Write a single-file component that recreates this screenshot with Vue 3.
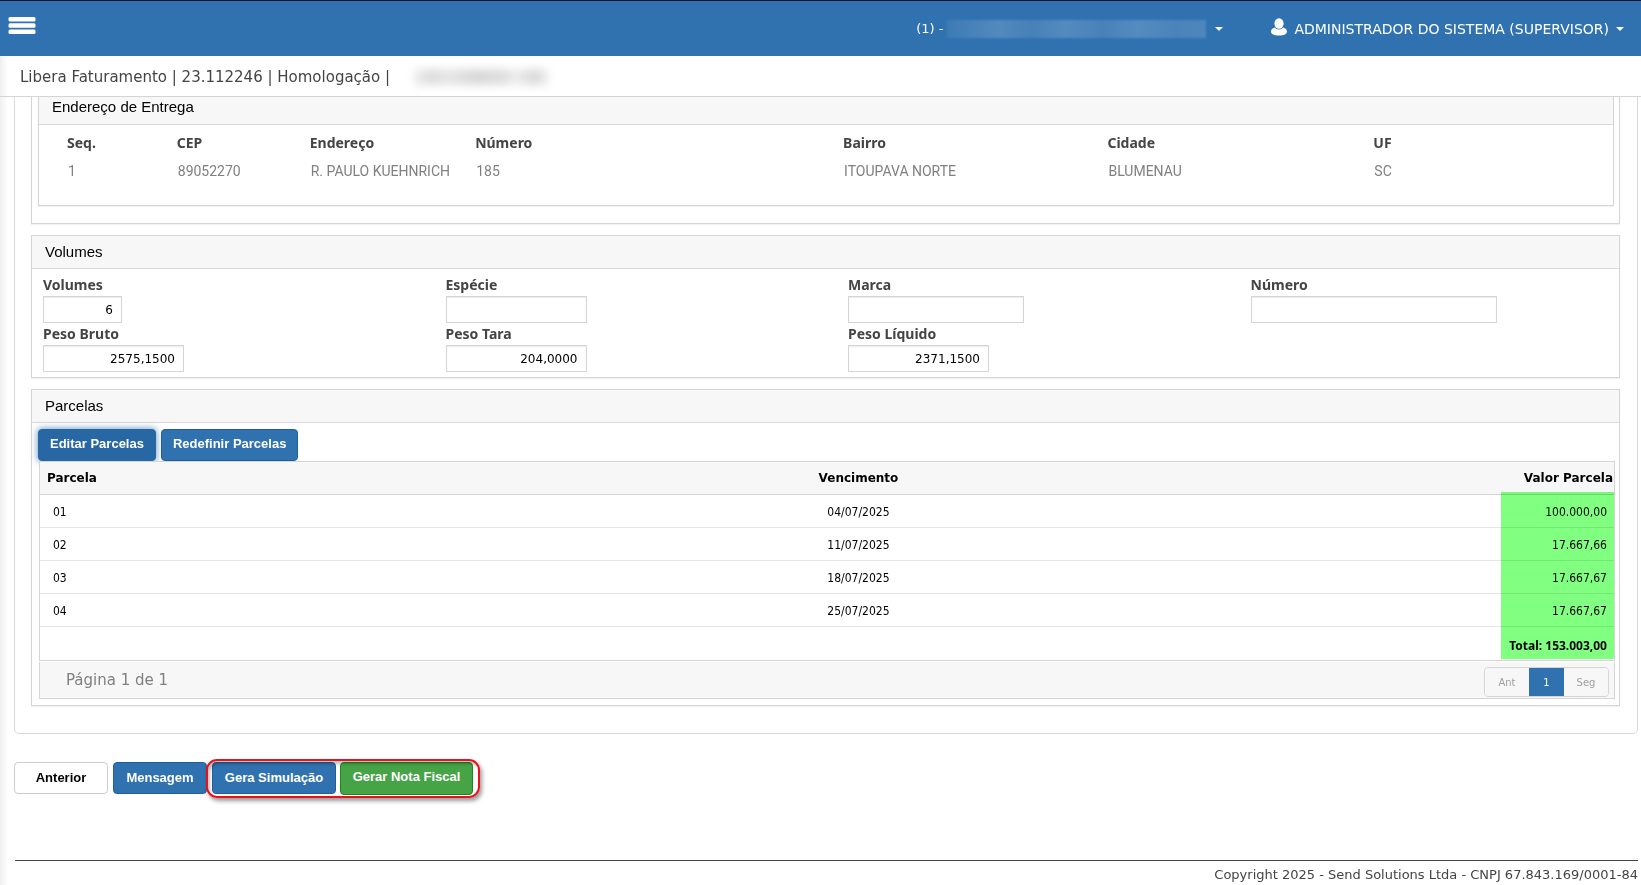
<script setup>
import { ref } from 'vue'

const addressCols = ['Seq.', 'CEP', 'Endereço', 'Número', 'Bairro', 'Cidade', 'UF']
const addresses = [
  ['1', '89052270', 'R. PAULO KUEHNRICH', '185', 'ITOUPAVA NORTE', 'BLUMENAU', 'SC'],
]

const fields = ref([
  { id: 'volumes', label: 'Volumes', value: '6', size: 'xs' },
  { id: 'especie', label: 'Espécie', value: '', size: 'sm' },
  { id: 'marca', label: 'Marca', value: '', size: 'md' },
  { id: 'numero', label: 'Número', value: '', size: 'lg' },
  { id: 'peso-bruto', label: 'Peso Bruto', value: '2575,1500', size: 'sm' },
  { id: 'peso-tara', label: 'Peso Tara', value: '204,0000', size: 'sm' },
  { id: 'peso-liquido', label: 'Peso Líquido', value: '2371,1500', size: 'sm' },
])

const parcelas = [
  { n: '01', venc: '04/07/2025', valor: '100.000,00' },
  { n: '02', venc: '11/07/2025', valor: '17.667,66' },
  { n: '03', venc: '18/07/2025', valor: '17.667,67' },
  { n: '04', venc: '25/07/2025', valor: '17.667,67' },
]
</script>

<template>
  <div class="page">
    <header class="topbar">
      <button class="menu" type="button" aria-label="Menu">
        <svg width="28" height="20" viewBox="0 0 28 20">
          <g fill="#fff">
            <rect x="0.5" y="1" width="27" height="4.500" rx="1.500" />
            <rect x="0.5" y="7.300" width="27" height="4.500" rx="1.500" />
            <rect x="0.5" y="13.600" width="27" height="4.500" rx="1.500" />
          </g>
        </svg>
      </button>
      <div class="account">
        <button class="drop company" type="button">
          <span>(1) -</span>
          <span class="redacted redacted-light"></span>
          <span class="caret"></span>
        </button>
        <button class="drop user" type="button">
          <svg width="16" height="18" viewBox="1 0 16 18">
            <ellipse cx="9" cy="5.5" rx="4.6" ry="5.2" fill="#fff" />
            <path d="M4.8 9.6C2.400 10.300 1 11.800 1 13.800c0 2.400 3.200 3.700 8 3.700s8-1.300 8-3.700c0-2-1.400-3.500-3.800-4.200-1 1.300-2.500 2-4.200 2s-3.200-.7-4.200-2z" fill="#fff" />
          </svg>
          <span>ADMINISTRADOR DO SISTEMA (SUPERVISOR)</span>
          <span class="caret"></span>
        </button>
      </div>
    </header>

    <div class="titlebar">
      <h1>Libera Faturamento | 23.112246 | Homologação |</h1>
      <span class="redacted redacted-dark"></span>
    </div>

    <main class="content">
      <div class="wizard">
        <section class="panel open-top">
          <div class="subpanel">
            <h2 class="heading cut">Endereço de Entrega</h2>
            <table class="address">
              <thead>
                <tr><th v-for="(c, i) in addressCols" :key="c" :class="'c' + i">{{ c }}</th></tr>
              </thead>
              <tbody>
                <tr v-for="row in addresses" :key="row[0]">
                  <td v-for="(v, i) in row" :key="i">{{ v }}</td>
                </tr>
              </tbody>
            </table>
          </div>
        </section>

        <section class="panel">
          <h2 class="heading">Volumes</h2>
          <div class="fields">
            <div v-for="f in fields" :key="f.id" class="field">
              <label :for="f.id">{{ f.label }}</label>
              <input :id="f.id" v-model="f.value" type="text" :class="f.size" />
            </div>
          </div>
        </section>

        <section class="panel">
          <h2 class="heading">Parcelas</h2>
          <div class="parcelas">
            <div class="tools">
              <button class="btn blue pressed" type="button">Editar Parcelas</button>
              <button class="btn blue" type="button">Redefinir Parcelas</button>
            </div>
            <div class="gridbox">
              <table class="grid">
                <thead>
                  <tr><th class="left">Parcela</th><th class="mid">Vencimento</th><th class="right">Valor Parcela</th></tr>
                </thead>
                <tbody>
                  <tr v-for="p in parcelas" :key="p.n">
                    <td class="left">{{ p.n }}</td>
                    <td>{{ p.venc }}</td>
                    <td class="right">{{ p.valor }}</td>
                  </tr>
                </tbody>
                <tfoot>
                  <tr>
                    <td></td>
                    <td></td>
                    <td class="right total">Total: 153.003,00</td>
                  </tr>
                </tfoot>
              </table>
              <div class="marker"></div>
            </div>
            <div class="pager">
              <span class="pages">Página 1 de 1</span>
              <nav class="nav">
                <button type="button">Ant</button>
                <button type="button" class="current">1</button>
                <button type="button">Seg</button>
              </nav>
            </div>
          </div>
        </section>
      </div>

      <div class="actions">
        <button class="btn white" type="button">Anterior</button>
        <button class="btn blue" type="button">Mensagem</button>
        <div class="highlight">
          <button class="btn blue sim" type="button">Gera Simulação</button>
          <button class="btn green" type="button">Gerar Nota Fiscal</button>
        </div>
      </div>
    </main>

    <footer class="footer">Copyright 2025 - Send Solutions Ltda - CNPJ 67.843.169/0001-84</footer>
  </div>
</template>

<style>
body {
  margin: 0;
  background: #fff;
}
</style>

<style scoped>
* {
  box-sizing: border-box;
}
.page {
  min-height: 100vh;
  overflow: hidden;
  display: flex;
  flex-direction: column;
  font-family: "DejaVu Sans", Verdana, sans-serif;
  color: #444;
  background: linear-gradient(to right, #f0f0f0, #fff 8px);
}
button {
  font: inherit;
  cursor: pointer;
}
h1,
h2 {
  margin: 0;
  font-weight: 400;
}

.topbar {
  display: flex;
  justify-content: space-between;
  align-items: flex-start;
  height: 56px;
  padding: 0 17px 0 8px;
  border-top: 1px solid #06162a;
  background: #3072af;
}
.menu {
  display: flex;
  margin-top: 15px;
  padding: 0;
  border: 0;
  background: none;
}
.account {
  display: flex;
  align-items: center;
  gap: 48px;
  height: 55px;
}
.drop {
  display: flex;
  align-items: center;
  padding: 0;
  border: 0;
  background: none;
  color: #fff;
  font-size: 14px;
  line-height: 20px;
  white-space: nowrap;
}
.company {
  font-size: 13px;
}
.user {
  gap: 7px;
}
.user svg {
  margin-bottom: 4px;
}
.caret {
  border: 4px solid transparent;
  border-top-color: #fff;
  border-bottom: 0;
}
.redacted-light {
  width: 259px;
  height: 18px;
  margin: 0 9px 0 4px;
  background: linear-gradient(to right, #3d7bb5, #528abd 20%, #4681b8 32%, #538bbe 46%, #4882b9 60%, #548cbf 74%, #4a84ba 88%, #4d87bc);
  filter: blur(1px);
}

.titlebar {
  display: flex;
  align-items: center;
  height: 41px;
  padding: 2px 20px 0;
  border-bottom: 1px solid #d5d5d5;
}
.titlebar h1 {
  font-size: 15px;
  line-height: 20px;
}
.redacted-dark {
  width: 134px;
  height: 16px;
  margin-left: 24px;
  background: linear-gradient(to right, #eee, #ddd 12%, #e6e6e6 26%, #d8d8d8 46%, #dedede 66%, #eee 76%, #d8d8d8 90%, #eee);
  filter: blur(4px);
}

.content {
  padding: 0 3px 0 14px;
}
.wizard {
  padding: 0 17px 27px 16px;
  border: 1px solid #d9d9d9;
  border-top: 0;
  border-radius: 0 0 5px 5px;
}
.panel {
  margin-bottom: 11px;
  border: 1px solid #d5d5d5;
  box-shadow: 0 1px 1px rgba(0, 0, 0, 0.05);
}
.panel:last-child {
  margin-bottom: 0;
}
.open-top {
  padding: 0 5px 17px 6px;
  border-top: 0;
}
.subpanel {
  border: 1px solid #d5d5d5;
  border-top: 0;
  box-shadow: 0 1px 1px rgba(0, 0, 0, 0.05);
}
.heading {
  padding: 0 13px;
  border-bottom: 1px solid #d9d9d9;
  background: #f7f7f7;
  color: #000;
  font-family: "Liberation Sans", Arial, sans-serif;
  font-size: 15px;
  line-height: 32px;
}
.heading.cut {
  height: 28px;
  line-height: 20px;
}

.address {
  width: 100%;
  height: 80px;
  padding: 4px 0 20px 28px;
  border-spacing: 0;
  table-layout: fixed;
}
.address th,
.address td {
  padding: 0;
  text-align: left;
  white-space: nowrap;
}
.address th {
  color: #444;
  font: 700 14px/28px "Noto Sans", sans-serif;
}
.address td {
  padding-left: 1px;
  color: #808080;
  font: 14px/28px Roboto, sans-serif;
}
.c0 { width: 7.1%; }
.c1 { width: 8.6%; }
.c2 { width: 10.7%; }
.c3 { width: 23.8%; }
.c4 { width: 17.1%; }
.c5 { width: 17.2%; }
.c6 { width: 15.5%; }

.fields {
  display: grid;
  grid-template-columns: repeat(4, 1fr);
  gap: 1px 34px;
  padding: 6px 0 5px 11px;
}
.field {
  display: flex;
  flex-direction: column;
  align-items: flex-start;
}
.field label {
  margin-bottom: 2px;
  color: #444;
  font: 700 14px/19px "Noto Sans", sans-serif;
}
.field input {
  height: 27px;
  padding: 0 8px;
  border: 1px solid #d5d5d5;
  background: #fff;
  box-shadow: inset 0 1px 1px rgba(0, 0, 0, 0.08);
  color: #000;
  font: 12px "DejaVu Sans", Verdana, sans-serif;
  text-align: right;
}
.field .xs { width: 79px; }
.field .sm { width: 141px; }
.field .md { width: 176px; }
.field .lg { width: 246px; }

.parcelas {
  padding: 6px 4px 6px 6px;
}
.tools {
  display: flex;
  gap: 5px;
}
.btn {
  height: 32px;
  padding: 0 12px;
  border: 1px solid #1f5f9c;
  border-radius: 4px;
  color: #fff;
  font: 700 13px/28px "Liberation Sans", Arial, sans-serif;
  white-space: nowrap;
}
.tools .btn {
  padding: 0 11px 3px;
}
.blue {
  background: #3072af;
}
.pressed {
  border-color: #2767a3;
  background: #2767a3;
  box-shadow: 0 0 6px 1px rgba(39, 103, 163, 0.6);
}
.white {
  min-width: 94px;
  border-color: #ccc;
  background: #fff;
  color: #000;
}
.green {
  height: 33px;
  padding-bottom: 4px;
  border-color: #1d861d;
  background: #46a346;
}

.gridbox {
  position: relative;
  margin-left: 1px;
}
.grid {
  width: 100%;
  border: 1px solid #d5d5d5;
  border-spacing: 0;
  table-layout: fixed;
  color: #000;
  text-align: center;
}
.grid th {
  height: 33px;
  padding: 0;
  border-bottom: 1px solid #d5d5d5;
  background: #f7f7f7;
  font: 700 12px/20px "DejaVu Sans", Verdana, sans-serif;
}
.grid td {
  height: 33px;
  padding: 3px 0 0;
  border-bottom: 1px solid #e6e6e6;
  font: 12px/29px "DejaVu Sans Condensed", "DejaVu Sans", Tahoma, sans-serif;
}
.grid tfoot td {
  border-bottom: 0;
}
.grid .left {
  padding-left: 13px;
  text-align: left;
}
.grid .right {
  padding-right: 7px;
  text-align: right;
}
.grid th.left {
  width: 35%;
  padding-left: 7px;
}
.grid th.mid {
  width: 34%;
}
.grid th.right {
  padding-right: 1px;
}
.grid td.total {
  font: 700 12px/29px "Noto Sans", sans-serif;
}
.marker {
  position: absolute;
  top: 31px;
  right: 1px;
  bottom: 2px;
  width: 113px;
  background: #80ff80;
  mix-blend-mode: multiply;
  pointer-events: none;
}

.pager {
  display: flex;
  align-items: center;
  justify-content: space-between;
  height: 37px;
  margin: 1px 0 0 1px;
  padding: 0 5px 0 26px;
  border: 1px solid #d5d5d5;
  border-top: 0;
  background: #f7f7f7;
}
.pages {
  color: #808080;
  font-size: 15px;
  line-height: 20px;
}
.nav {
  display: flex;
  height: 30px;
  margin-top: 4px;
  overflow: hidden;
  border: 1px solid #d5d5d5;
  border-radius: 4px;
}
.nav button {
  width: 44px;
  padding: 0;
  border: 0;
  background: #f7f7f7;
  color: #a0a0a0;
  font-size: 10px;
}
.nav .current {
  width: 35px;
  background: #3072af;
  color: #fff;
}

.actions {
  display: flex;
  align-items: flex-start;
  gap: 5px;
  padding-top: 28px;
}
.actions .blue {
  min-width: 94px;
}
.actions .btn {
  padding-left: 11px;
  padding-right: 11px;
}
.highlight {
  position: relative;
  display: flex;
  gap: 4px;
}
.highlight .btn.sim {
  min-width: 124px;
}
.highlight .green {
  min-width: 133px;
}
.highlight::after {
  content: "";
  position: absolute;
  inset: -3px -7px -3px -6px;
  border: 2px solid #e8121c;
  border-radius: 11px;
  box-shadow: 2px 3px 4px rgba(0, 0, 0, 0.4), inset 2px 3px 3px rgba(0, 0, 0, 0.25);
  pointer-events: none;
}

.footer {
  margin: auto 3px 0 15px;
  padding: 4px 0 0;
  border-top: 1px solid #444;
  color: #444;
  font-size: 13px;
  line-height: 20px;
  text-align: right;
}
</style>
